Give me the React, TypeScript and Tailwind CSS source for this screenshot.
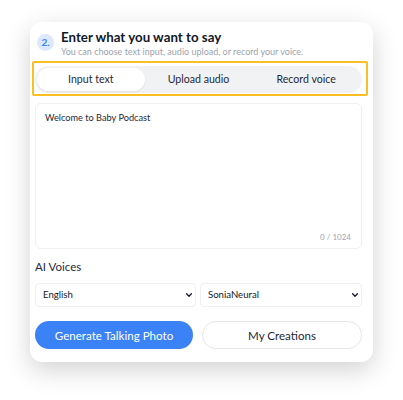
import React, { useState } from "react";

const tabs = ["Input text", "Upload audio", "Record voice"];

const Chevron: React.FC = () => (
  <svg width="8" height="8" viewBox="0 0 10 10" className="shrink-0">
    <path d="M2 3.5 L5 6.5 L8 3.5" fill="none" stroke="#111827" strokeWidth="1.6" strokeLinecap="round" strokeLinejoin="round" />
  </svg>
);

const App: React.FC = () => {
  const [active, setActive] = useState(0);

  return (
    <div className="w-[403px] h-[400px] bg-white pt-[22px] pl-[30px]" style={{ fontFamily: 'Lato, "Noto Sans", sans-serif' }}>
      <div className="w-[343px] h-[340px] rounded-xl bg-white shadow-[0_8px_26px_rgba(0,0,0,0.18)] pl-[5px] pr-[11px] pt-[6px] flex flex-col">
        {/* Header */}
        <div className="flex items-start gap-[7px] pl-[2px]">
          <div className="w-[17px] h-[17px] mt-[6px] rounded-full bg-[#dbe8fd] flex items-center justify-center text-[10px] font-bold text-[#3b82f6]">
            2.
          </div>
          <div className="flex flex-col">
            <h2 className="text-[13.3px] leading-[18px] font-bold text-[#111827]">Enter what you want to say</h2>
            <p className="text-[9px] leading-[12px] text-[#9ca3af]">
              You can choose text input, audio upload, or record your voice.
            </p>
          </div>
        </div>

        {/* Tabs */}
        <div className="mt-[3px] -ml-[3px] w-[336px] h-[35px] border-2 border-[#fbbf24] rounded-[2px] pl-[1px] pt-[3px]">
          <div className="w-[327px] h-[27px] rounded-full bg-[#f1f2f4] p-[2px] grid grid-cols-3">
            {tabs.map((t, i) => (
              <button
                key={t}
                onClick={() => setActive(i)}
                className={`rounded-full text-[10.6px] text-[#1f2937] ${
                  active === i ? "bg-white shadow-[0_1px_2px_rgba(0,0,0,0.08)]" : ""
                }`}
              >
                {t}
              </button>
            ))}
          </div>
        </div>

        {/* Textarea */}
        <div className="mt-[7px] w-[327px] h-[146px] rounded-md border border-[#eeeff1] flex flex-col justify-between pl-[9px] pr-[10px] pt-[7px] pb-[5px]">
          <p className="text-[9.2px] text-[#1f2937]">Welcome to Baby Podcast</p>
          <p className="text-[8px] text-[#9ca3af] text-right">0 / 1024</p>
        </div>

        {/* AI voices */}
        <p className="mt-[9px] text-[11.5px] text-[#1f2937]">AI Voices</p>

        <div className="mt-[8px] flex gap-[4px] w-[327px]">
          <div className="w-[161px] h-[24px] rounded border border-[#eeeff1] flex items-center justify-between pl-[7px] pr-[2px] text-[9.6px] text-[#111827]">
            <span>English</span>
            <Chevron />
          </div>
          <div className="w-[162px] h-[24px] rounded border border-[#eeeff1] flex items-center justify-between pl-[7px] pr-[2px] text-[9.6px] text-[#111827]">
            <span>SoniaNeural</span>
            <Chevron />
          </div>
        </div>

        <div className="mt-[14px] flex gap-[9px] w-[327px]">
          <button className="w-[158px] h-[28px] rounded-full bg-[#3b82f6] text-white text-[11.6px]">
            Generate Talking Photo
          </button>
          <button className="w-[160px] h-[28px] rounded-full border border-[#e5e7eb] bg-white text-[#1f2937] text-[11.6px]">
            My Creations
          </button>
        </div>
      </div>
    </div>
  );
};

export default App;
